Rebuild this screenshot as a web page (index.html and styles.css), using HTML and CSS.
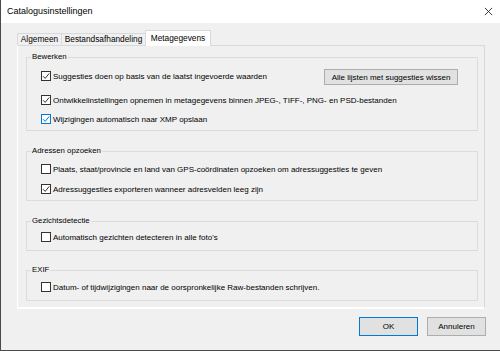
FILE: index.html
```html
<!DOCTYPE html>
<html lang="nl">
<head>
<meta charset="utf-8">
<title>Catalogusinstellingen</title>
<link rel="stylesheet" href="styles.css">
</head>
<body>
<div class="window">
  <div class="titlebar">
    <span class="title">Catalogusinstellingen</span>
    <svg class="close" width="10" height="10" viewBox="0 0 10 10"><path d="M1 1 L9 9 M9 1 L1 9" stroke="#222" stroke-width="1" fill="none"/></svg>
  </div>
  <div class="client">
    <div class="tabs">
      <div class="tab t1">Algemeen</div>
      <div class="tab t2">Bestandsafhandeling</div>
      <div class="tab active">Metagegevens</div>
    </div>
    <div class="panel">
      <div class="group g1">
        <span class="legend">Bewerken</span>
        <div class="row r1">
          <span class="cb checked"><svg viewBox="0 0 8 8"><path d="M1 4.2 L3.2 6.4 L7.2 1.4" /></svg></span>
          <span class="lbl">Suggesties doen op basis van de laatst ingevoerde waarden</span>
          <span class="btn wide">Alle lijsten met suggesties wissen</span>
        </div>
        <div class="row r2">
          <span class="cb checked"><svg viewBox="0 0 8 8"><path d="M1 4.2 L3.2 6.4 L7.2 1.4" /></svg></span>
          <span class="lbl">Ontwikkelinstellingen opnemen in metagegevens binnen JPEG-, TIFF-, PNG- en PSD-bestanden</span>
        </div>
        <div class="row r3">
          <span class="cb checked hover"><svg viewBox="0 0 8 8"><path d="M1 4.2 L3.2 6.4 L7.2 1.4" /></svg></span>
          <span class="lbl">Wijzigingen automatisch naar XMP opslaan</span>
        </div>
      </div>
      <div class="group g2">
        <span class="legend">Adressen opzoeken</span>
        <div class="row r1">
          <span class="cb"></span>
          <span class="lbl">Plaats, staat/provincie en land van GPS-coördinaten opzoeken om adressuggesties te geven</span>
        </div>
        <div class="row r2">
          <span class="cb checked"><svg viewBox="0 0 8 8"><path d="M1 4.2 L3.2 6.4 L7.2 1.4" /></svg></span>
          <span class="lbl">Adressuggesties exporteren wanneer adresvelden leeg zijn</span>
        </div>
      </div>
      <div class="group g3">
        <span class="legend">Gezichtsdetectie</span>
        <div class="row r1">
          <span class="cb"></span>
          <span class="lbl">Automatisch gezichten detecteren in alle foto's</span>
        </div>
      </div>
      <div class="group g4">
        <span class="legend">EXIF</span>
        <div class="row r1">
          <span class="cb"></span>
          <span class="lbl">Datum- of tijdwijzigingen naar de oorspronkelijke Raw-bestanden schrijven.</span>
        </div>
      </div>
    </div>
    <div class="footer">
      <span class="btn default">OK</span>
      <span class="btn">Annuleren</span>
    </div>
  </div>
</div>
</body>
</html>
```

FILE: styles.css
```css
* { box-sizing: border-box; }
html, body { margin: 0; padding: 0; }
body {
  background: #3c3c3c;
  font-family: "Liberation Sans", Arial, sans-serif;
  color: #000;
  width: 500px;
  height: 351px;
  overflow: hidden;
}
.window {
  width: 500px;
  height: 351px;
  border-left: 1px solid #4a4a4a;
  border-bottom: 1px solid #4a4a4a;
  display: flex;
  flex-direction: column;
  background: #f0f0f0;
}
.titlebar {
  height: 23px;
  background: #fff;
  display: flex;
  align-items: center;
  padding-left: 6px;
  padding-right: 7px;
}
.title {
  font-size: 9px;
  flex: 1;
  padding-bottom: 1px;
}
.close { width: 9px; height: 9px; margin-top: -1px; }
.client {
  flex: 1;
  background: #f0f0f0;
  display: flex;
  flex-direction: column;
}
.tabs {
  display: flex;
  align-items: flex-end;
  height: 15px;
  margin-top: 7px;
  margin-left: 16px;
  position: relative;
  z-index: 1;
}
.tab {
  height: 12px;
  border: 1px solid #d9d9d9;
  border-bottom: none;
  font-size: 8.3px;
  display: flex;
  align-items: center;
  justify-content: center;
  background: #f0f0f0;
  padding-bottom: 1px;
}
.t1 { width: 45px; }
.t2 { width: 85px; margin-left: -1px; }
.active {
  width: 66px;
  height: 16px;
  margin-left: -1px;
  margin-bottom: -1px;
  background: #fff;
  padding-bottom: 2px;
}
.panel {
  margin-left: 16px;
  width: 468px;
  height: 264px;
  border-top: 1px solid #d9d9d9;
  border-right: 1px solid #d9d9d9;
  border-left: 1px solid #fff;
  border-bottom: 2px solid #fff;
  padding: 11px 6px 0 8px;
  display: flex;
  flex-direction: column;
}
.group {
  border: 1px solid #dcdcdc;
  position: relative;
  padding-left: 14px;
  padding-right: 19px;
  display: flex;
  flex-direction: column;
}
.legend {
  position: absolute;
  top: -6px;
  left: 4px;
  font-size: 7.8px;
  line-height: 10px;
  padding: 0 1px;
  background: #f0f0f0;
}
.g1 { height: 74px; padding-top: 12px; }
.g2 { height: 50px; padding-top: 11px; margin-top: 20px; }
.g3 { height: 30px; padding-top: 9px; margin-top: 20px; }
.g4 { height: 31px; padding-top: 10px; margin-top: 19px; }
.row {
  height: 12px;
  display: flex;
  align-items: center;
  font-size: 8px;
}
.g1 .r2 { margin-top: 12px; }
.g1 .r3 { margin-top: 7px; }
.g2 .r2 { margin-top: 8px; }
.cb {
  width: 10px;
  height: 10px;
  border: 1px solid #333;
  background: #fff;
  flex: none;
  display: flex;
  align-items: center;
  justify-content: center;
  margin-right: 2px;
}
.cb svg { width: 8px; height: 8px; }
.cb path { fill: none; stroke: #333; stroke-width: 1; }
.cb.hover { border-color: #0078d7; }
.cb.hover path { stroke: #0078d7; }
.lbl { white-space: nowrap; }
.btn {
  background: #e1e1e1;
  border: 1px solid #adadad;
  font-size: 8px;
  display: flex;
  align-items: center;
  justify-content: center;
  height: 19px;
  width: 59px;
}
.btn.wide {
  width: 134px;
  height: 16px;
  margin-left: auto;
  align-self: flex-start;
  margin-top: -1px;
}
.btn.default { border-color: #0078d7; }
.footer {
  display: flex;
  justify-content: flex-end;
  gap: 9px;
  margin-top: 8px;
  padding-right: 14px;
}
```
